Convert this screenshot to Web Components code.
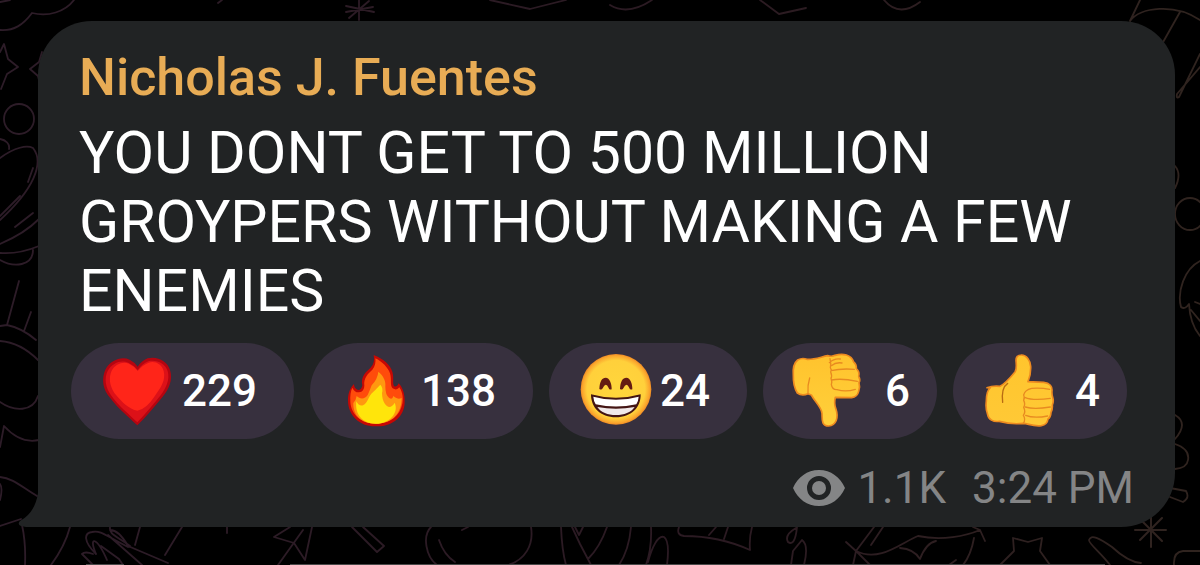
<!DOCTYPE html>
<html lang="en">
<head>
<meta charset="utf-8">
<meta name="viewport" content="width=device-width, initial-scale=1">
<title>Channel message</title>
<style>
  html { background: #000; }
  body { margin: 0; font-family: Roboto, "Liberation Sans", sans-serif; }
</style>
</head>
<body>
<chat-screen>
  <message-bubble>
    <span slot="author">Nicholas J. Fuentes</span>
    <span slot="text">YOU DONT GET TO 500 MILLION GROYPERS WITHOUT MAKING A FEW ENEMIES</span>
    <reaction-pill slot="reactions" emoji="heart" label="Love">229</reaction-pill>
    <reaction-pill slot="reactions" emoji="fire" label="Fire">138</reaction-pill>
    <reaction-pill slot="reactions" emoji="grin" label="Grin">24</reaction-pill>
    <reaction-pill slot="reactions" emoji="down" label="Thumbs down" compact>6</reaction-pill>
    <reaction-pill slot="reactions" emoji="up" label="Thumbs up" compact>4</reaction-pill>
    <message-meta slot="meta"><span slot="views">1.1K</span><time slot="time" datetime="15:24">3:24 PM</time></message-meta>
  </message-bubble>
</chat-screen>

<script>
const define = (name, html, setup) => customElements.define(name, class extends HTMLElement {
  constructor() {
    super();
    this.attachShadow({ mode: "open" }).innerHTML = html;
  }
  connectedCallback() { if (setup) setup(this, this.shadowRoot); }
});

/* Doodle wallpaper behind the conversation */
define("chat-wallpaper", `
<style>
  :host { display: block; position: absolute; inset: 0; overflow: hidden; }
  svg { display: block; width: 100%; height: 100%; }
</style>
<svg viewBox="0 0 1200 565" preserveAspectRatio="xMidYMid slice" aria-hidden="true">
  <defs>
    <linearGradient id="ink" gradientUnits="userSpaceOnUse" x1="0" y1="0" x2="1200" y2="0">
      <stop offset="0" stop-color="#2d1c28"/><stop offset=".6" stop-color="#2b1a22"/><stop offset="1" stop-color="#30241f"/>
    </linearGradient>
  </defs>
  <g fill="none" stroke="url(#ink)" stroke-width="1.8" stroke-linecap="round" stroke-linejoin="round">
    <path d="M0 30C14 31 23 25 32 13C48 17 65 12 74 0M0 2L10 0"/>
    <path d="M0 52L4 44L8 59L18 67L7 74L1 89M42 52L39 62L30 69L38 76L41 88"/>
    <circle cx="19" cy="119" r="15"/>
    <path d="M0 139C6 140 10 144 9 149M0 158C15 147 27 145 33 148C45 163 33 190 0 220M33 168L28 182M20 196L0 216M33 213L15 227M0 244C14 238 28 230 39 219M0 253C13 254 27 251 39 246M0 260C14 268 33 266 33 250"/>
    <path d="M19 281L7 325L0 326M31 312L24 331M7 325Q22 328 36 340M0 341C14 342 27 349 38 360M0 402C14 412 33 412 38 396M0 447L4 426C14 437 26 443 39 440"/>
    <path d="M0 477C13 478 23 488 37 496M0 500Q3 488 0 484M0 526L21 519M22 525Q26 543 25 565M70 527Q65 546 51 565"/>
    <path d="M359 0V20M346 6L374 12M349 18L369 1M346 12L373 7M218 3L222 0M490 0L530 9L566 0M610 5Q628 16 652 0M760 0L779 14L806 8M884 0Q899 18 920 2"/>
    <path d="M93 565L82 554Q85 551 93 554M96 554C83 541 84 533 92 532C101 530 106 536 128 547L130 546C117 536 109 535 110 527M110 530Q119 530 128 546L168 563M96 554C88 535 97 537 107 560M101 546L119 559L123 565M108 535L142 565M140 527L135 545M182 527L165 555M227 527V533"/>
    <path d="M290 527L274 537L294 543L305 560L312 527M303 530L278 565M363 527L384 546L377 552L352 527"/>
    <path d="M431 527C422 536 426 557 437 565M439 540Q444 555 455 562M462 530L468 527M531 527C534 545 525 560 508 565M561 527Q562 551 566 565M572 527L580 544L591 565M575 527L579 535L583 527M607 527Q600 547 588 559M631 527Q629 550 619 565M651 527Q652 548 646 565M648 562C652 547 658 535 664 537Q670 541 667 565"/>
    <path d="M679 527Q676 535 684 536Q719 536 750 550Q749 538 752 527M709 535L716 527M724 539L728 527M796 528Q784 535 788 542Q795 547 797 527M791 565L793 551L802 540Q809 545 804 565"/>
    <path d="M874 527L856 551L846 542M856 551L853 565M856 551L870 565M883 527L871 545M856 551C880 563 902 542 918 536C942 541 966 536 980 530L973 527M980 530L985 541M900 548Q914 549 920 559Q926 543 936 541M974 538Q971 555 963 565M956 560L949 565M1000 565L1014 551L1013 538L1028 542L1042 538L1040 551L1050 565"/>
    <path d="M1110 565C1101 553 1088 543 1089 540C1091 534 1099 538 1112 547Q1128 562 1141 563M1174 565Q1173 552 1183 551H1200"/>
    <path d="M1151 514V547M1135 530H1166M1139 518L1162 541M1140 540L1162 518" stroke-width="2"/>
    <path d="M1130 21L1140 0M1130 21C1140 7 1175 3 1200 20M1180 12L1162 44M1200 54L1179 97Q1176 99 1177 94L1200 67M1175 166Q1182 174 1175 188"/>
    <ellipse cx="1190" cy="214" rx="15" ry="16"/>
    <path d="M1200 261C1184 269 1177 292 1181 307Q1185 310 1189 304Q1190 324 1200 336M1195 302L1200 304M1191 310L1200 321M1175 415Q1189 423 1175 439M1175 444Q1190 449 1188 460Q1187 468 1175 469M1170 488L1186 491Q1190 498 1183 502L1170 497"/>
  </g>
  <path d="M86 564H124V565H86ZM290 564H1105V565H290Z" fill="#4a4a4a"/>
</svg>`);

define("chat-screen", `
<style>
  :host { display: block; position: relative; min-height: 100vh; box-sizing: border-box; padding: 21px 25px 38px 38px; }
  main { position: relative; }
</style>
<chat-wallpaper></chat-wallpaper>
<main><slot></slot></main>`);

define("message-bubble", `
<style>
  :host { display: block; position: relative; box-sizing: border-box; min-height: 506px;
    padding: 23px 33px 8px; background: #212324; border-radius: 54px 54px 54px 0; }
  .tail { position: absolute; right: 100%; bottom: 0; width: 20px; height: 34px; fill: #212324; }
  header, p { margin: 0; padding: 0 8px; }
  header { color: #e8ac55; font-size: 52px; font-weight: 500; line-height: 68px; }
  p { color: #fff; font-size: 59px; line-height: 69px; padding-top: 6px; }
  .reactions { display: flex; flex-wrap: wrap; gap: 16px; margin-top: 18px; }
  footer { display: flex; justify-content: flex-end; margin-top: 19px; padding-right: 8px; }
</style>
<svg class="tail" viewBox="0 0 20 34" aria-hidden="true"><path d="M20 0Q17 20 2 28Q-1 31 3 33L8 34H20Z"/></svg>
<article>
  <header><slot name="author"></slot></header>
  <p><slot name="text"></slot></p>
  <div class="reactions"><slot name="reactions"></slot></div>
  <footer><slot name="meta"></slot></footer>
</article>`);

const EMOJI = {
  heart: ["126 60 216 216", `
    <path d="M232 271C205 245 176 222 150 188C128 164 124 131 136 104C151 75 185 63 209 74Q225 82 233 95Q244 78 263 70C291 62 323 78 330 105C339 134 327 163 308 185C282 217 257 246 232 271Z" fill="#b50510"/>
    <path d="M232 262C208 238 178 215 154 182C136 158 132 130 143 108C157 83 184 74 205 83Q222 91 233 105Q246 87 265 79C289 73 316 86 323 108C330 133 319 159 302 181C280 209 255 239 232 262Z" fill="#dc1118"/>
    <path d="M232 227C207 223 185 201 163 174C148 150 146 126 155 107C166 86 190 78 207 86Q224 94 233 108Q247 90 266 83C286 77 306 88 311 108C318 135 303 158 283 185Q259 222 232 227Z" fill="#ff2519"/>`],
  fire: ["123 60 216 216", `
    <path d="M221 60C250 71 270 89 277 110C283 130 276 145 283 154C291 157 294 149 296 145C309 158 315 180 314 203C313 243 278 276 229 274C180 276 145 242 144 198C143 176 151 157 162 147Q162 161 174 165Q185 165 187 151C181 125 199 110 211 99Q226 85 221 60Z" fill="#c60804"/>
    <path d="M226 70C247 80 264 98 270 115C276 135 269 151 278 160Q290 168 298 157C309 174 310 191 307 206C300 242 271 265 229 266C187 267 153 240 151 200C150 182 152 168 157 158Q164 173 177 172Q193 169 193 152C190 128 205 115 217 104Q229 90 226 70Z" fill="#ff4b0b"/>
    <path d="M235 110C252 124 258 140 256 155Q256 179 267 188Q277 196 280 183C291 192 297 193 305 189C305 230 282 265 229 266C180 266 159 238 160 204Q168 196 170 183C180 193 195 193 203 180Q208 170 215 151Q233 132 235 110Z" fill="#ff9810"/>
    <path d="M241 149Q250 158 246 174C246 200 258 214 267 216Q278 215 284 203C298 235 266 266 229 266C188 267 164 239 169 199Q176 214 189 211C205 202 204 187 214 176Q227 164 241 149Z" fill="#ffe50b"/>`],
  grin: ["120 60 216 216", `
    <defs><radialGradient id="face"><stop offset="0" stop-color="#ffd63c"/><stop offset=".82" stop-color="#ffd03b"/><stop offset=".95" stop-color="#faa52d"/><stop offset="1" stop-color="#ee8924"/></radialGradient></defs>
    <circle cx="228" cy="163" r="106" fill="url(#face)"/>
    <path d="M178 162C179 139 186 128 197 128C209 129 215 145 215 163Q207 165 206 159Q197 139 188 160Q185 166 178 162ZM240 162C241 139 248 128 259 128C271 129 277 145 277 163Q269 165 268 159Q259 139 250 160Q247 166 240 162Z" fill="#651c12"/>
    <path d="M153 178Q228 199 302 178C303 218 273 247 228 247C181 247 153 218 153 178Z" fill="#431513"/>
    <path d="M160 185Q228 204 296 185Q295 199 289 208Q228 221 167 208Q161 199 160 185Z" fill="#fff"/>
    <path d="M172 216Q228 226 284 216C272 233 253 240 228 240C202 240 184 233 172 216Z" fill="#f0e9e9"/>`],
  down: ["120 60 216 216", `
    <defs><linearGradient id="skin" x2="0" y2="1"><stop offset="0" stop-color="#ffc32d"/><stop offset="1" stop-color="#ffd03b"/></linearGradient></defs>
    <path d="M131 75Q145 67 159 73C182 74 200 66 221 62Q234 66 243 61C267 54 292 59 299 81Q308 88 307 101Q318 111 314 124Q320 134 315 143Q319 156 314 169Q310 186 293 188L244 187Q239 205 246 223C254 247 247 272 224 273C201 273 205 252 204 235C203 218 184 202 172 180L162 176Q144 184 130 174Q117 153 118 121Q115 88 131 75Z" fill="url(#skin)" stroke="#ed8a20" stroke-width="5" stroke-linejoin="round"/>
    <g fill="none" stroke="#e88a20" stroke-width="4" stroke-linecap="round" stroke-linejoin="round">
      <path d="M162 176Q160 151 167 129M228 71Q232 88 229 98Q234 105 230 111Q235 123 231 130Q235 141 232 149Q235 165 249 164Q275 172 304 163M226 83Q241 69 259 72M231 107Q261 100 301 103M233 135Q262 129 310 139M232 92Q245 81 264 84"/>
    </g>`],
  up: ["117 60 216 216", `
    <defs><linearGradient id="skin" x2="0" y2="1"><stop offset="0" stop-color="#ffc52d"/><stop offset="1" stop-color="#ffc936"/></linearGradient></defs>
    <path d="M126 158Q142 152 165 154C182 145 197 127 210 111Q216 102 213 77Q213 60 228 60C245 59 256 77 257 94Q258 119 249 140L296 142C315 144 322 156 321 167Q320 178 323 187Q327 199 322 210Q323 223 318 232Q317 247 309 252Q307 269 289 272C264 275 250 266 235 265C204 269 181 264 163 259C145 262 130 253 128 239Q121 222 124 198Q124 168 136 158Z" fill="url(#skin)" stroke="#ed8a20" stroke-width="5" stroke-linejoin="round"/>
    <g fill="none" stroke="#e88a20" stroke-width="4" stroke-linecap="round" stroke-linejoin="round">
      <path d="M235 265Q243 253 235 241Q243 230 236 217Q242 207 236 196Q240 187 236 180Q239 165 260 160Q289 158 314 163M239 187Q265 198 316 190M241 216Q266 224 316 216M242 241Q266 251 308 243"/>
      <path d="M188 145Q168 158 173 202" stroke="#b86b12"/>
    </g>`]
};

define("emoji-icon", `
<style>
  :host { display: block; width: 72px; height: 72px; flex: none; }
  svg { display: block; width: 100%; height: 100%; overflow: visible; }
</style>
<svg aria-hidden="true"></svg>`, (el, root) => {
  const [box, art] = EMOJI[el.getAttribute("name")];
  const svg = root.querySelector("svg");
  svg.setAttribute("viewBox", box);
  svg.innerHTML = art;
});

define("reaction-pill", `
<style>
  :host { display: block; --gap: 8px; --end: 37px; }
  :host([compact]) { --gap: 19px; --end: 27px; }
  button { display: flex; align-items: center; gap: var(--gap); height: 96px; margin: 0;
    padding: 0 var(--end) 0 31px; border: 0; border-radius: 48px; background: #37303e;
    color: #fff; font: 500 44px/52px Roboto, "Liberation Sans", sans-serif; cursor: pointer; }
</style>
<button type="button"><span class="icon"></span><span><slot></slot></span></button>`, (el, root) => {
  const icon = document.createElement("emoji-icon");
  icon.setAttribute("name", el.getAttribute("emoji"));
  root.querySelector(".icon").replaceChildren(icon);
  root.querySelector("button").title = el.getAttribute("label");
});

define("message-meta", `
<style>
  :host { display: flex; align-items: center; color: #848586; font-size: 44px; line-height: 60px; }
  svg { width: 52px; height: 36px; margin-right: 12px; }
  .time { margin-left: 26px; }
</style>
<svg viewBox="0 0 52 36" role="img" aria-label="Views">
  <path fill="currentColor" fill-rule="evenodd" d="M26 0C38 0 47 7 52 18C47 29 38 36 26 36S5 29 0 18C5 7 14 0 26 0ZM26 6A12 12 0 1 0 26 30A12 12 0 1 0 26 6Z"/>
  <circle cx="26" cy="18" r="7" fill="currentColor"/>
</svg>
<slot name="views"></slot><span class="time"><slot name="time"></slot></span>`);
</script>
</body>
</html>
